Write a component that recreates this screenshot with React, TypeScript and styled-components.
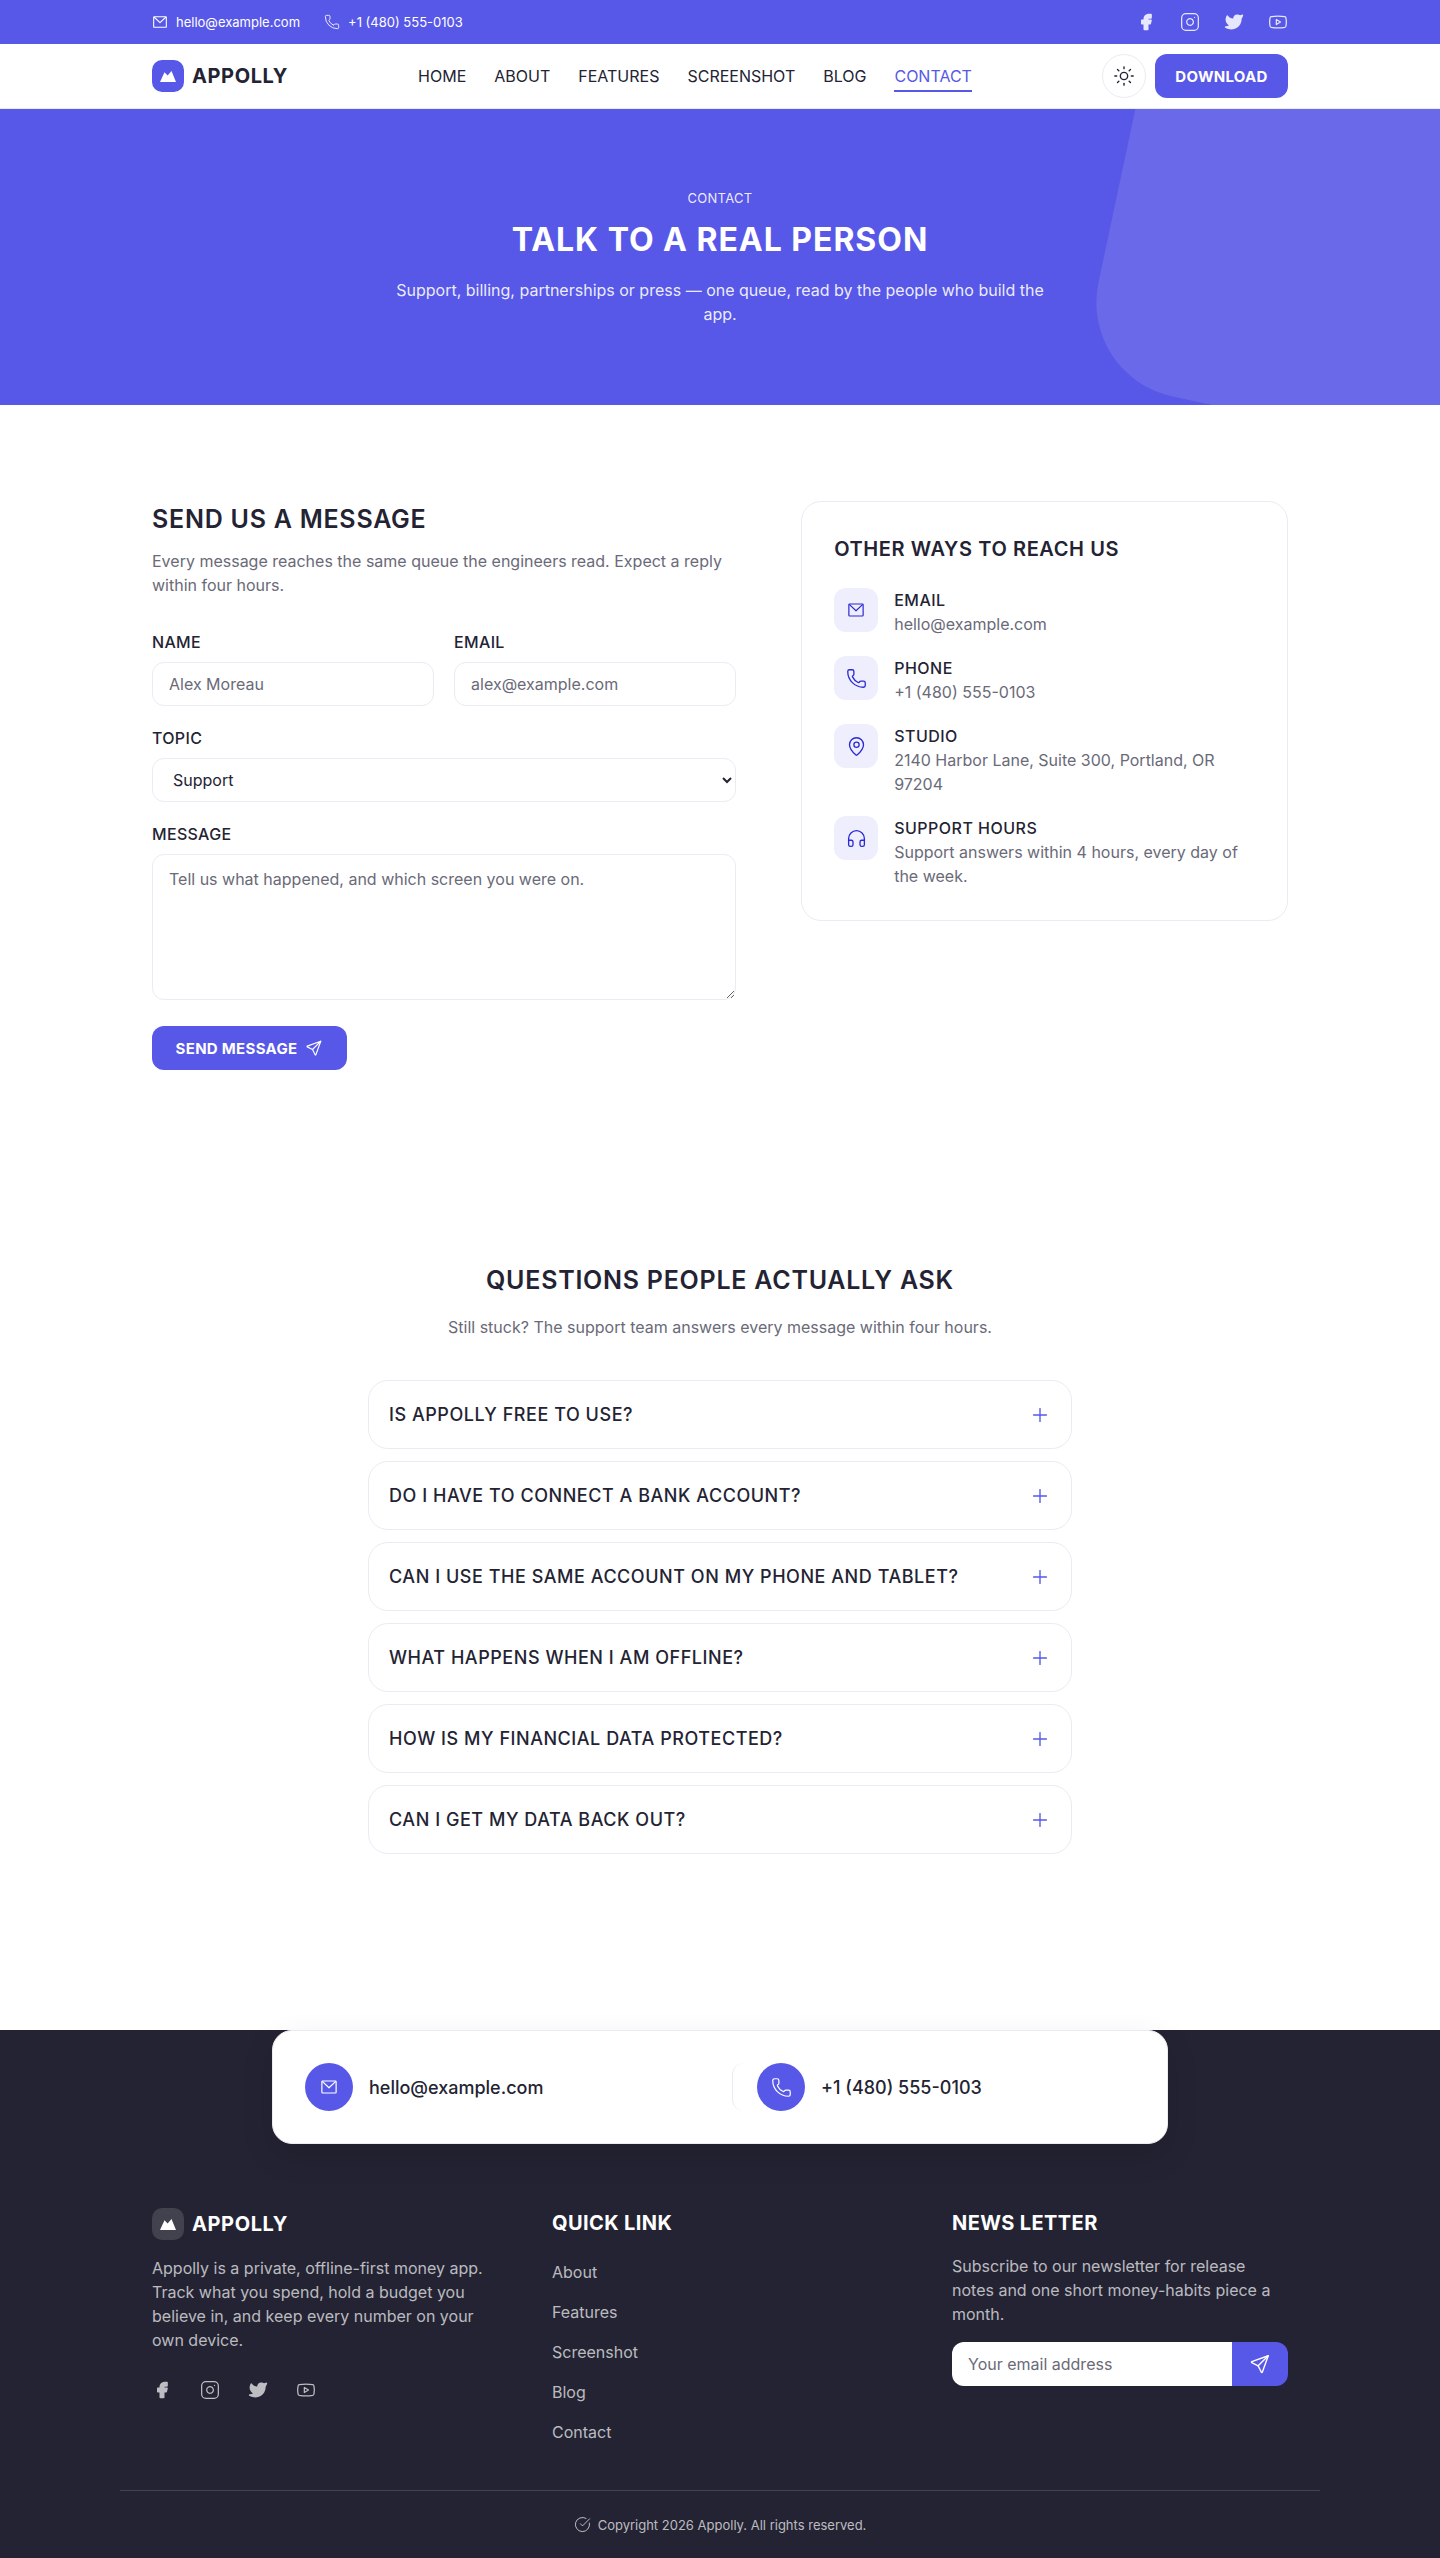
import React from "react";
import styled, { createGlobalStyle } from "styled-components";
import { Phone, Sun, Plus, MapPin, Headphones, CircleCheckBig, Instagram, Youtube } from "lucide-react";
import { TbBrandFacebookFilled, TbBrandTwitterFilled } from "react-icons/tb";

const primary = "#5858e8";
const ink = "#232333";
const muted = "#6a6a78";
const line = "#ebebf3";

const GlobalStyle = createGlobalStyle`
  * { box-sizing: border-box; }
  html, body { margin: 0; padding: 0; background: #fff; }
  body { font-family: Inter, "Liberation Sans", sans-serif; color: ${ink}; }
  h1, h2, h3, p { margin: 0; }
  a { color: inherit; text-decoration: none; }
`;

const Container = styled.div`
  width: 1136px;
  margin: 0 auto;
`;

const TopBar = styled.div`
  height: 44px;
  background: ${primary};
  color: #fff;
`;

const TopInner = styled(Container)`
  height: 100%;
  display: flex;
  align-items: center;
  justify-content: space-between;
`;

const TopContacts = styled.div`
  display: flex;
  gap: 24px;
`;

const TopContact = styled.a`
  display: flex;
  align-items: center;
  gap: 8px;
  font-size: 13px;
  font-weight: 400;
`;

const Socials = styled.div<{ $gap: number; $color: string }>`
  display: flex;
  gap: ${(p) => p.$gap}px;
  color: ${(p) => p.$color};
  svg { display: block; }
`;

const NavBar = styled.header`
  height: 65px;
  background: #fff;
  border-bottom: 1px solid ${line};
`;

const NavInner = styled(Container)`
  height: 100%;
  display: flex;
  align-items: center;
  justify-content: space-between;
`;

const Brand = styled.a<{ $dark?: boolean }>`
  display: flex;
  align-items: center;
  gap: 8px;
  font-size: 20px;
  font-weight: 700;
  letter-spacing: 0.03em;
  color: ${(p) => (p.$dark ? "#fff" : ink)};
`;

const BrandMark = styled.span<{ $dark?: boolean }>`
  width: 32px;
  height: 32px;
  border-radius: 10px;
  background: ${(p) => (p.$dark ? "rgba(255,255,255,.14)" : primary)};
  display: flex;
  align-items: center;
  justify-content: center;
`;

const NavLinks = styled.nav`
  display: flex;
  gap: 28px;
`;

const NavLink = styled.a<{ $active?: boolean }>`
  font-size: 16px;
  line-height: 24px;
  padding: 4px 0 2px;
  color: ${(p) => (p.$active ? primary : ink)};
  border-bottom: 2px solid ${(p) => (p.$active ? primary : "transparent")};
`;

const NavActions = styled.div`
  display: flex;
  align-items: center;
  gap: 9px;
`;

const ThemeToggle = styled.button`
  width: 44px;
  height: 44px;
  border-radius: 50%;
  border: 1px solid ${line};
  background: #fff;
  color: ${ink};
  display: flex;
  align-items: center;
  justify-content: center;
  padding: 0;
`;

const PrimaryButton = styled.button`
  height: 44px;
  border: 0;
  border-radius: 12px;
  background: ${primary};
  color: #fff;
  font-family: inherit;
  font-size: 15px;
  font-weight: 700;
  letter-spacing: 0.02em;
  display: inline-flex;
  align-items: center;
  gap: 8px;
  padding: 0 20px;
`;

const DownloadButton = styled(PrimaryButton)`
  width: 133px;
  justify-content: center;
  padding: 0;
`;

const Hero = styled.section`
  position: relative;
  overflow: hidden;
  background: ${primary};
  color: #fff;
  padding: 81px 0 79px;
  text-align: center;
`;

const HeroShape = styled.div`
  position: absolute;
  top: -175px;
  right: -185px;
  width: 500px;
  height: 500px;
  border-radius: 96px;
  background: rgba(255, 255, 255, 0.1);
  transform: rotate(12deg);
`;

const HeroContent = styled.div`
  position: relative;
  width: 680px;
  margin: 0 auto;
`;

const Eyebrow = styled.div`
  font-size: 13px;
  line-height: 16px;
  letter-spacing: 0.02em;
  color: rgba(255, 255, 255, 0.9);
`;

const HeroTitle = styled.h1`
  margin-top: 14px;
  font-size: 32px;
  line-height: 40px;
  font-weight: 700;
  letter-spacing: 0.03em;
`;

const HeroText = styled.p`
  margin-top: 18px;
  font-size: 16px;
  line-height: 24px;
  color: rgba(255, 255, 255, 0.9);
`;

const ContactSection = styled.section`
  padding: 96px 0;
`;

const ContactGrid = styled(Container)`
  display: grid;
  grid-template-columns: 1.2fr 1fr;
  gap: 65px;
  align-items: start;
`;

const FormTitle = styled.h2`
  font-size: 25px;
  line-height: 36px;
  font-weight: 600;
  letter-spacing: 0.03em;
`;

const FormIntro = styled.p`
  margin: 12px 0 33px;
  font-size: 16px;
  line-height: 24px;
  color: ${muted};
`;

const Form = styled.form`
  display: flex;
  flex-direction: column;
  gap: 20px;
`;

const FieldRow = styled.div`
  display: grid;
  grid-template-columns: 1fr 1fr;
  gap: 20px;
`;

const Field = styled.label`
  display: flex;
  flex-direction: column;
  gap: 8px;
`;

const FieldLabel = styled.span`
  font-size: 16px;
  line-height: 24px;
  font-weight: 500;
  letter-spacing: 0.02em;
`;

const controlCss = `
  width: 100%;
  border: 1px solid ${line};
  border-radius: 12px;
  background: #fff;
  font-family: inherit;
  font-size: 16px;
  color: ${ink};
  padding: 0 16px;
  &::placeholder { color: ${muted}; opacity: 1; }
`;

const Input = styled.input`
  ${controlCss}
  height: 44px;
`;

const Select = styled.select`
  ${controlCss}
  height: 44px;
`;

const TextArea = styled.textarea`
  ${controlCss}
  display: block;
  height: 146px;
  padding: 12px 16px;
  line-height: 24px;
`;

const SendButton = styled(PrimaryButton)`
  align-self: flex-start;
  width: 195px;
  justify-content: center;
  padding: 0;
  margin-top: 6px;
`;

const InfoCard = styled.aside`
  border: 1px solid ${line};
  border-radius: 20px;
  padding: 32px;
`;

const InfoTitle = styled.h3`
  font-size: 20px;
  line-height: 30px;
  font-weight: 600;
  letter-spacing: 0.03em;
  margin-bottom: 24px;
`;

const InfoList = styled.div`
  display: flex;
  flex-direction: column;
  gap: 20px;
`;

const InfoRow = styled.div`
  display: flex;
  gap: 16px;
`;

const InfoIcon = styled.span`
  flex: 0 0 44px;
  height: 44px;
  border-radius: 12px;
  background: #eeeefd;
  color: #2a2ad0;
  display: flex;
  align-items: center;
  justify-content: center;
`;

const InfoLabel = styled.div`
  font-size: 16px;
  line-height: 24px;
  font-weight: 500;
  letter-spacing: 0.03em;
`;

const InfoValue = styled.div`
  font-size: 16px;
  line-height: 24px;
  color: ${muted};
`;

const FaqSection = styled.section`
  padding: 96px 0 176px;
`;

const FaqTitle = styled.h2`
  text-align: center;
  font-size: 25px;
  line-height: 36px;
  font-weight: 600;
  letter-spacing: 0.03em;
`;

const FaqIntro = styled.p`
  margin: 17px 0 41px;
  text-align: center;
  font-size: 16px;
  line-height: 24px;
  color: ${muted};
`;

const FaqList = styled.div`
  width: 704px;
  margin: 0 auto;
  display: flex;
  flex-direction: column;
  gap: 12px;
`;

const FaqItem = styled.div`
  height: 69px;
  border: 1px solid ${line};
  border-radius: 20px;
  padding: 0 20px;
  display: flex;
  align-items: center;
  justify-content: space-between;
  font-size: 18px;
  font-weight: 500;
  letter-spacing: 0.03em;
  svg { color: ${primary}; }
`;

const Footer = styled.footer`
  background: ${ink};
  color: #fff;
`;

const Strip = styled.div`
  width: 896px;
  margin: 0 auto;
  background: #fff;
  border: 1px solid ${line};
  border-radius: 20px;
  padding: 32px;
  display: grid;
  grid-template-columns: 1fr 1fr;
  gap: 24px;
  box-shadow: 0 12px 32px rgba(0, 0, 0, 0.12);
  color: ${ink};
`;

const StripItem = styled.a<{ $divided?: boolean }>`
  display: flex;
  align-items: center;
  gap: 16px;
  font-size: 18px;
  font-weight: 500;
  ${(p) => p.$divided && `border-left: 1px solid ${line}; border-radius: 12px; padding-left: 24px;`}
`;

const StripIcon = styled.span`
  width: 48px;
  height: 48px;
  border-radius: 50%;
  background: ${primary};
  color: #fff;
  display: flex;
  align-items: center;
  justify-content: center;
`;

const FooterGrid = styled(Container)`
  display: grid;
  grid-template-columns: repeat(3, 336px);
  gap: 64px;
  padding: 64px 0 38px;
`;

const FooterText = styled.p`
  font-size: 16px;
  line-height: 24px;
  color: rgba(255, 255, 255, 0.7);
`;

const BrandText = styled(FooterText)`
  margin: 16px 0 28px;
`;

const NewsText = styled(FooterText)`
  margin-top: 16px;
`;

const FooterTitle = styled.h3`
  font-size: 20px;
  line-height: 30px;
  font-weight: 700;
  letter-spacing: 0.02em;
`;

const FooterLinks = styled.div`
  margin-top: 14px;
  display: flex;
  flex-direction: column;
`;

const FooterLink = styled.a`
  font-size: 16px;
  line-height: 40px;
  color: rgba(255, 255, 255, 0.7);
`;

const Newsletter = styled.form`
  margin-top: 16px;
  display: flex;
  height: 44px;
  border-radius: 12px;
  overflow: hidden;
`;

const NewsInput = styled.input`
  flex: 1;
  min-width: 0;
  border: 0;
  background: #fff;
  padding: 0 16px;
  font-family: inherit;
  font-size: 16px;
  &::placeholder { color: ${muted}; opacity: 1; }
`;

const NewsButton = styled.button`
  width: 56px;
  border: 0;
  padding: 0;
  background: ${primary};
  color: #fff;
  display: flex;
  align-items: center;
  justify-content: center;
`;

const Copyright = styled.div`
  width: 1200px;
  margin: 0 auto;
  height: 68px;
  border-top: 1px solid rgba(255, 255, 255, 0.15);
  display: flex;
  align-items: center;
  justify-content: center;
  gap: 7px;
  font-size: 13px;
  color: rgba(255, 255, 255, 0.7);
`;

type IconProps = { size?: number };

const MailIcon = ({ size = 18 }: IconProps) => (
  <svg width={size} height={size} viewBox="0 0 24 24" fill="none" stroke="currentColor" strokeWidth={1.6} strokeLinejoin="round">
    <rect x="2.5" y="4" width="19" height="16" rx="1" />
    <path d="M3 4.5 12 13l9-8.5" />
  </svg>
);

const SendIcon = ({ size = 18 }: IconProps) => (
  <svg width={size} height={size} viewBox="0 0 24 24" fill="none" stroke="currentColor" strokeWidth={1.5} strokeLinecap="round" strokeLinejoin="round">
    <path d="M10 14 21 3" />
    <path d="M21 3l-6.5 18a.55.55 0 0 1-1 0L10 14l-7-3.5a.55.55 0 0 1 0-1L21 3" />
  </svg>
);

const LogoMark = () => (
  <svg width="16" height="11" viewBox="0 0 16 11" fill="#fff">
    <path d="M0 11 4.5 1.2 7.6 4.6 11.5 0 16 11z" />
  </svg>
);

const SocialIcons = () => (
  <>
    <TbBrandFacebookFilled size={20} />
    <Instagram size={20} strokeWidth={1.5} />
    <TbBrandTwitterFilled size={20} />
    <Youtube size={20} strokeWidth={1.5} />
  </>
);

const questions = [
  "Is Appolly free to use?",
  "Do I have to connect a bank account?",
  "Can I use the same account on my phone and tablet?",
  "What happens when I am offline?",
  "How is my financial data protected?",
  "Can I get my data back out?",
];

const navItems = ["HOME", "ABOUT", "FEATURES", "SCREENSHOT", "BLOG", "CONTACT"];
const footerLinks = ["About", "Features", "Screenshot", "Blog", "Contact"];

export default function App() {
  return (
    <>
      <GlobalStyle />
      <TopBar>
        <TopInner>
          <TopContacts>
            <TopContact href="#">
              <MailIcon size={16} />
              hello@example.com
            </TopContact>
            <TopContact href="#">
              <Phone size={16} strokeWidth={1.3} />
              +1 (480) 555-0103
            </TopContact>
          </TopContacts>
          <Socials $gap={24} $color="rgba(255,255,255,.85)">
            <SocialIcons />
          </Socials>
        </TopInner>
      </TopBar>

      <NavBar>
        <NavInner>
          <Brand href="#">
            <BrandMark>
              <LogoMark />
            </BrandMark>
            APPOLLY
          </Brand>
          <NavLinks>
            {navItems.map((item) => (
              <NavLink key={item} href="#" $active={item === "CONTACT"}>
                {item}
              </NavLink>
            ))}
          </NavLinks>
          <NavActions>
            <ThemeToggle aria-label="Toggle theme">
              <Sun size={22} strokeWidth={1.5} />
            </ThemeToggle>
            <DownloadButton>DOWNLOAD</DownloadButton>
          </NavActions>
        </NavInner>
      </NavBar>

      <Hero>
        <HeroShape />
        <HeroContent>
          <Eyebrow>CONTACT</Eyebrow>
          <HeroTitle>TALK TO A REAL PERSON</HeroTitle>
          <HeroText>Support, billing, partnerships or press — one queue, read by the people who build the app.</HeroText>
        </HeroContent>
      </Hero>

      <ContactSection>
        <ContactGrid>
          <div>
            <FormTitle>SEND US A MESSAGE</FormTitle>
            <FormIntro>Every message reaches the same queue the engineers read. Expect a reply within four hours.</FormIntro>
            <Form onSubmit={(e) => e.preventDefault()}>
              <FieldRow>
                <Field>
                  <FieldLabel>NAME</FieldLabel>
                  <Input placeholder="Alex Moreau" />
                </Field>
                <Field>
                  <FieldLabel>EMAIL</FieldLabel>
                  <Input type="email" placeholder="alex@example.com" />
                </Field>
              </FieldRow>
              <Field>
                <FieldLabel>TOPIC</FieldLabel>
                <Select defaultValue="Support">
                  <option>Support</option>
                  <option>Billing</option>
                  <option>Partnerships</option>
                  <option>Press</option>
                </Select>
              </Field>
              <Field>
                <FieldLabel>MESSAGE</FieldLabel>
                <TextArea placeholder="Tell us what happened, and which screen you were on." />
              </Field>
              <SendButton type="submit">
                SEND MESSAGE
                <SendIcon />
              </SendButton>
            </Form>
          </div>

          <InfoCard>
            <InfoTitle>OTHER WAYS TO REACH US</InfoTitle>
            <InfoList>
              <InfoRow>
                <InfoIcon>
                  <MailIcon />
                </InfoIcon>
                <div>
                  <InfoLabel>EMAIL</InfoLabel>
                  <InfoValue>hello@example.com</InfoValue>
                </div>
              </InfoRow>
              <InfoRow>
                <InfoIcon>
                  <Phone size={21} strokeWidth={1.5} />
                </InfoIcon>
                <div>
                  <InfoLabel>PHONE</InfoLabel>
                  <InfoValue>+1 (480) 555-0103</InfoValue>
                </div>
              </InfoRow>
              <InfoRow>
                <InfoIcon>
                  <MapPin size={21} strokeWidth={1.5} />
                </InfoIcon>
                <div>
                  <InfoLabel>STUDIO</InfoLabel>
                  <InfoValue>2140 Harbor Lane, Suite 300, Portland, OR 97204</InfoValue>
                </div>
              </InfoRow>
              <InfoRow>
                <InfoIcon>
                  <Headphones size={21} strokeWidth={1.5} />
                </InfoIcon>
                <div>
                  <InfoLabel>SUPPORT HOURS</InfoLabel>
                  <InfoValue>Support answers within 4 hours, every day of the week.</InfoValue>
                </div>
              </InfoRow>
            </InfoList>
          </InfoCard>
        </ContactGrid>
      </ContactSection>

      <FaqSection>
        <FaqTitle>QUESTIONS PEOPLE ACTUALLY ASK</FaqTitle>
        <FaqIntro>Still stuck? The support team answers every message within four hours.</FaqIntro>
        <FaqList>
          {questions.map((q) => (
            <FaqItem key={q}>
              {q.toUpperCase()}
              <Plus size={22} strokeWidth={1.5} />
            </FaqItem>
          ))}
        </FaqList>
      </FaqSection>

      <Footer>
        <Strip>
          <StripItem href="#">
            <StripIcon>
              <MailIcon />
            </StripIcon>
            hello@example.com
          </StripItem>
          <StripItem href="#" $divided>
            <StripIcon>
              <Phone size={21} strokeWidth={1.4} />
            </StripIcon>
            +1 (480) 555-0103
          </StripItem>
        </Strip>

        <FooterGrid>
          <div>
            <Brand href="#" $dark>
              <BrandMark $dark>
                <LogoMark />
              </BrandMark>
              APPOLLY
            </Brand>
            <BrandText>Appolly is a private, offline-first money app. Track what you spend, hold a budget you believe in, and keep every number on your own device.</BrandText>
            <Socials $gap={28} $color="rgba(255,255,255,.7)">
              <SocialIcons />
            </Socials>
          </div>
          <div>
            <FooterTitle>QUICK LINK</FooterTitle>
            <FooterLinks>
              {footerLinks.map((l) => (
                <FooterLink key={l} href="#">
                  {l}
                </FooterLink>
              ))}
            </FooterLinks>
          </div>
          <div>
            <FooterTitle>NEWS LETTER</FooterTitle>
            <NewsText>Subscribe to our newsletter for release notes and one short money-habits piece a month.</NewsText>
            <Newsletter onSubmit={(e) => e.preventDefault()}>
              <NewsInput placeholder="Your email address" />
              <NewsButton aria-label="Subscribe">
                <SendIcon size={22} />
              </NewsButton>
            </Newsletter>
          </div>
        </FooterGrid>

        <Copyright>
          <CircleCheckBig size={17} strokeWidth={1.4} />
          Copyright 2026 Appolly. All rights reserved.
        </Copyright>
      </Footer>
    </>
  );
}
